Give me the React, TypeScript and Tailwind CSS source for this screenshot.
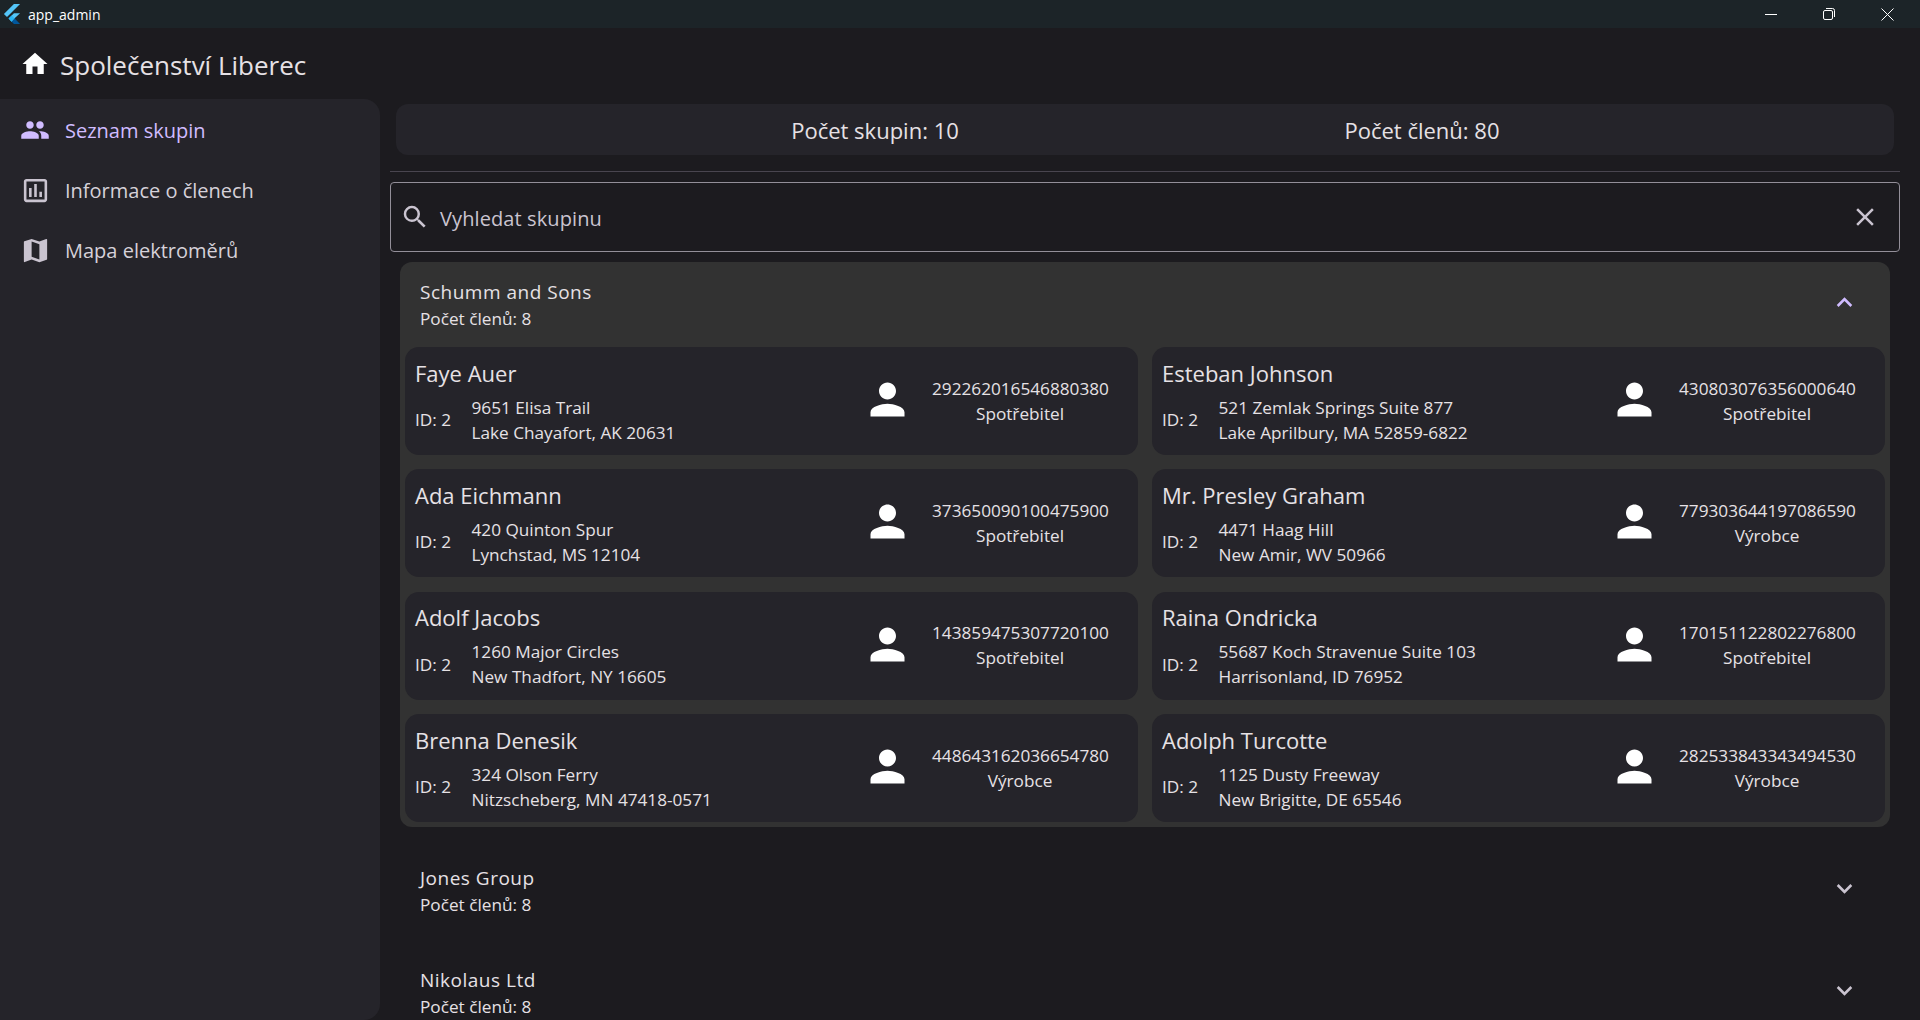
import React from "react";
import { MdHome, MdPeople, MdOutlineAssessment, MdMap, MdSearch, MdClose, MdPerson, MdExpandLess, MdExpandMore } from "react-icons/md";

const font = "font-['Open_Sans','Noto_Sans','Noto_Sans_CJK_SC',sans-serif]";

const members = [
  ["Faye Auer", "9651 Elisa Trail", "Lake Chayafort, AK 20631", "292262016546880380", "Spotřebitel"],
  ["Esteban Johnson", "521 Zemlak Springs Suite 877", "Lake Aprilbury, MA 52859-6822", "430803076356000640", "Spotřebitel"],
  ["Ada Eichmann", "420 Quinton Spur", "Lynchstad, MS 12104", "373650090100475900", "Spotřebitel"],
  ["Mr. Presley Graham", "4471 Haag Hill", "New Amir, WV 50966", "779303644197086590", "Výrobce"],
  ["Adolf Jacobs", "1260 Major Circles", "New Thadfort, NY 16605", "143859475307720100", "Spotřebitel"],
  ["Raina Ondricka", "55687 Koch Stravenue Suite 103", "Harrisonland, ID 76952", "170151122802276800", "Spotřebitel"],
  ["Brenna Denesik", "324 Olson Ferry", "Nitzscheberg, MN 47418-0571", "448643162036654780", "Výrobce"],
  ["Adolph Turcotte", "1125 Dusty Freeway", "New Brigitte, DE 65546", "282533843343494530", "Výrobce"],
];

function Card({ m }: { m: string[] }) {
  return (
    <div className="h-[108px] rounded-[14px] bg-[#25242a] pl-[10px] pr-[30px] flex items-center text-[#e6e1e5]">
      <div className="flex-1 min-w-0">
        <div className="text-[22px] leading-[28px] mt-[1px]">{m[0]}</div>
        <div className="flex items-center mt-[8px] text-[17.2px] leading-[25px]">
          <div className="w-[56.5px]">ID: 2</div>
          <div>
            <div>{m[1]}</div>
            <div>{m[2]}</div>
          </div>
        </div>
      </div>
      <MdPerson className="text-white mr-[19px] -mt-[3px]" size={51} />
      <div className="w-[176px] text-center text-[17.2px] leading-[25px] -mt-[1px]">
        <div>{m[3]}</div>
        <div>{m[4]}</div>
      </div>
    </div>
  );
}

function Collapsed({ name }: { name: string }) {
  return (
    <div className="mx-[10px] h-[84px] mb-[18px] pl-[20px] pr-[30px] flex items-center justify-between text-[#e6e1e5] shrink-0">
      <div>
        <div className="text-[19px] leading-[27px] tracking-[0.5px]">{name}</div>
        <div className="text-[17.2px] leading-[25px]">Počet členů: 8</div>
      </div>
      <MdExpandMore className="text-[#cac4d0] -mt-[5px]" size={31} />
    </div>
  );
}

export default function App() {
  return (
    <div className={`${font} w-[1920px] h-[1020px] overflow-hidden bg-[#1c1b1f] flex flex-col`}>
      <div className="h-[28px] shrink-0 bg-[#1c2428] flex items-center text-white pr-[4px]">
        <svg width="20" height="20" viewBox="0 0 24 24" className="ml-[2px]">
          <path d="M14.314 0 2.3 12 6 15.7 21.684.013h-7.357z" fill="#54c5f8" />
          <path d="M14.328 11.072 7.857 17.53l3.74 3.74 3.23-3.74 6.873-6.458z" fill="#54c5f8" />
          <path d="M11.6 21.3 7.857 17.53l3.74-3.74 3.73 3.74z" fill="#29b6f6" />
          <path d="M11.6 21.3l3.73-3.77 6.37 6.47h-7.37z" fill="#01579b" />
        </svg>
        <span className="ml-[6px] text-[14px]">app_admin</span>
        <div className="flex-1" />
        <div className="w-[58px] flex justify-center">
          <div className="w-[12px] h-px bg-white" />
        </div>
        <div className="w-[58px] flex justify-center">
          <svg width="12" height="12" viewBox="0 0 12 12" fill="none" stroke="white">
            <rect x="0.5" y="2.5" width="9" height="9" rx="1.5" />
            <path d="M3 .5h6.5a2 2 0 0 1 2 2V9" />
          </svg>
        </div>
        <div className="w-[58px] flex justify-center">
          <svg width="13" height="13" viewBox="0 0 13 13" stroke="white">
            <path d="M.5.5l12 12M12.5.5l-12 12" />
          </svg>
        </div>
      </div>

      <div className="h-[71px] shrink-0 flex items-center pl-[20px] text-[#e6e1e5]">
        <MdHome size={30} className="text-white" />
        <span className="ml-[10px] text-[26px] pt-[4px]">Společenství Liberec</span>
      </div>

      <div className="flex flex-1 min-h-0">
        <div className="w-[380px] shrink-0 bg-[#25242a] rounded-r-[16px] pt-[1px] text-[20px] text-[#cac4d0]">
          <div className="h-[60px] flex items-center pl-[20px] text-[#d0bcff]">
            <MdPeople size={30} />
            <span className="ml-[15px] pt-[2px]">Seznam skupin</span>
          </div>
          <div className="h-[60px] flex items-center pl-[20px]">
            <MdOutlineAssessment size={31} />
            <span className="ml-[14px] pt-[2px] text-[#d6d1d9]">Informace o členech</span>
          </div>
          <div className="h-[60px] flex items-center pl-[20px]">
            <MdMap size={31} />
            <span className="ml-[14px] pt-[2px] text-[#d6d1d9]">Mapa elektroměrů</span>
          </div>
        </div>

        <div className="flex-1 min-w-0 pl-[10px] pr-[20px] flex flex-col overflow-hidden">
          <div className="mx-[6px] mt-[5px] h-[51px] shrink-0 rounded-[12px] bg-[#25242a] flex items-center justify-center text-[22px] text-[#e6e1e5] pt-[2px] pl-[7px]">
            <div className="w-[547px] text-center">Počet skupin: 10</div>
            <div className="w-[547px] text-center">Počet členů: 80</div>
          </div>
          <div className="h-px bg-[#49454f] mt-[16px] shrink-0" />
          <div className="mt-[10px] h-[70px] shrink-0 rounded-[4px] border border-[#938f99] flex items-center pl-[9px] pr-[19px] text-[#cac4d0]">
            <MdSearch size={30} />
            <span className="ml-[10px] text-[20px] tracking-[0.1px] flex-1 pt-[3px]">Vyhledat skupinu</span>
            <MdClose size={30} />
          </div>

          <div className="mx-[10px] mt-[10px] h-[565px] shrink-0 rounded-[12px] bg-[#323232] px-[5px] pb-[4px] flex flex-col">
            <div className="h-[85px] shrink-0 pl-[15px] pr-[25px] flex items-center justify-between text-[#e6e1e5]">
              <div>
                <div className="text-[19px] leading-[27px] tracking-[0.5px]">Schumm and Sons</div>
                <div className="text-[17.2px] leading-[25px]">Počet členů: 8</div>
              </div>
              <MdExpandLess className="text-[#d0bcff] -mt-[5px]" size={31} />
            </div>
            <div className="grid grid-cols-2 gap-x-[14px] gap-y-[14.4px]">
              {members.map((m) => (
                <Card key={m[0]} m={m} />
              ))}
            </div>
          </div>

          <div className="h-[22px] shrink-0" />
          <Collapsed name="Jones Group" />
          <Collapsed name="Nikolaus Ltd" />
        </div>
      </div>
    </div>
  );
}
